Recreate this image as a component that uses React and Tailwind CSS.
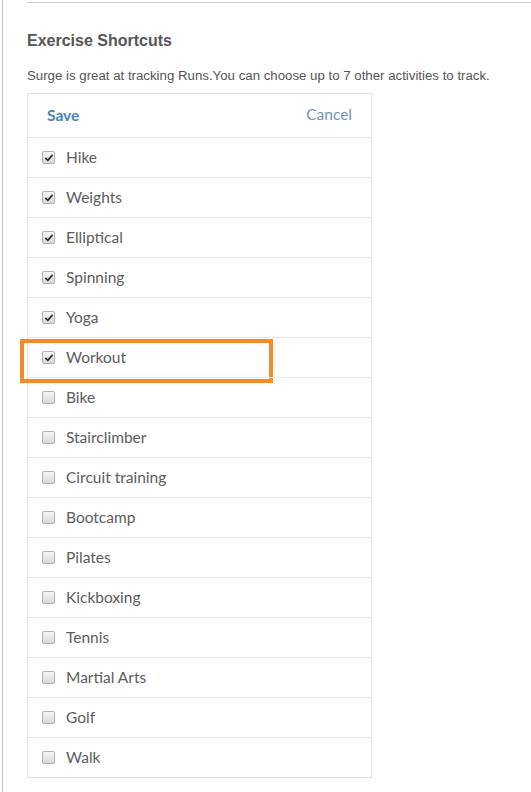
const activities = [
  { name: "Hike", checked: true },
  { name: "Weights", checked: true },
  { name: "Elliptical", checked: true },
  { name: "Spinning", checked: true },
  { name: "Yoga", checked: true },
  { name: "Workout", checked: true, highlight: true },
  { name: "Bike" },
  { name: "Stairclimber" },
  { name: "Circuit training" },
  { name: "Bootcamp" },
  { name: "Pilates" },
  { name: "Kickboxing" },
  { name: "Tennis" },
  { name: "Martial Arts" },
  { name: "Golf" },
  { name: "Walk" },
];

function Checkbox({ checked }) {
  return (
    <span className="relative flex h-[13px] w-[13px] items-center justify-center rounded-[2px] border border-[#b0b0b0] bg-gradient-to-b from-[#f6f6f6] to-[#d8d8d8]">
      {checked && (
        <svg viewBox="0 0 12 12" className="h-[10px] w-[10px]">
          <path d="M2.2 6.4 L4.6 8.8 L9.8 2.8" fill="none" stroke="#2b2b2b" strokeWidth="2" strokeLinecap="round" strokeLinejoin="round" />
        </svg>
      )}
    </span>
  );
}

export default function App() {
  return (
    <div className="flex h-[792px] w-[531px] overflow-hidden bg-white">
      <div className="ml-[2px] w-px shrink-0 bg-[#c8c8c8]" />
      <div className="flex flex-1 flex-col pl-[24px]">
        <div className="mt-[2px] h-px bg-[#c8c8c8]" />
        <h2 className="mt-[28px] text-[16px] font-bold leading-[20px] text-[#555] font-['Liberation_Sans',Arial,sans-serif]">
          Exercise Shortcuts
        </h2>
        <p className="mt-[17px] text-[13.25px] leading-[16px] text-[#555] font-['Liberation_Sans',Arial,sans-serif]">
          Surge is great at tracking Runs.You can choose up to 7 other activities to track.
        </p>
        <div className="relative mt-[9px] w-[345px] border border-[#e2e2e2] font-['Lato','Open_Sans',sans-serif]">
          <div className="flex h-[43px] items-center justify-between pl-[19px] pr-[19px]">
            <span className="mt-[0px] text-[15.5px] font-bold text-[#4a84c0]">Save</span>
            <span className="-mt-[2px] text-[15.5px] text-[#6f93ba]">Cancel</span>
          </div>
          {activities.map((a) => (
            <div
              key={a.name}
              className="relative flex h-[40px] items-center gap-[11px] border-t border-[#e6e6e6] pl-[14px]"
            >
              <Checkbox checked={a.checked} />
              <span className="text-[15.5px] text-[#5c5c5c]">{a.name}</span>
              {a.highlight && (
                <div className="pointer-events-none absolute left-[-8px] top-[1px] h-[44px] w-[253px] border-[4px] border-[#f28a2e]" />
              )}
            </div>
          ))}
        </div>
      </div>
    </div>
  );
}
